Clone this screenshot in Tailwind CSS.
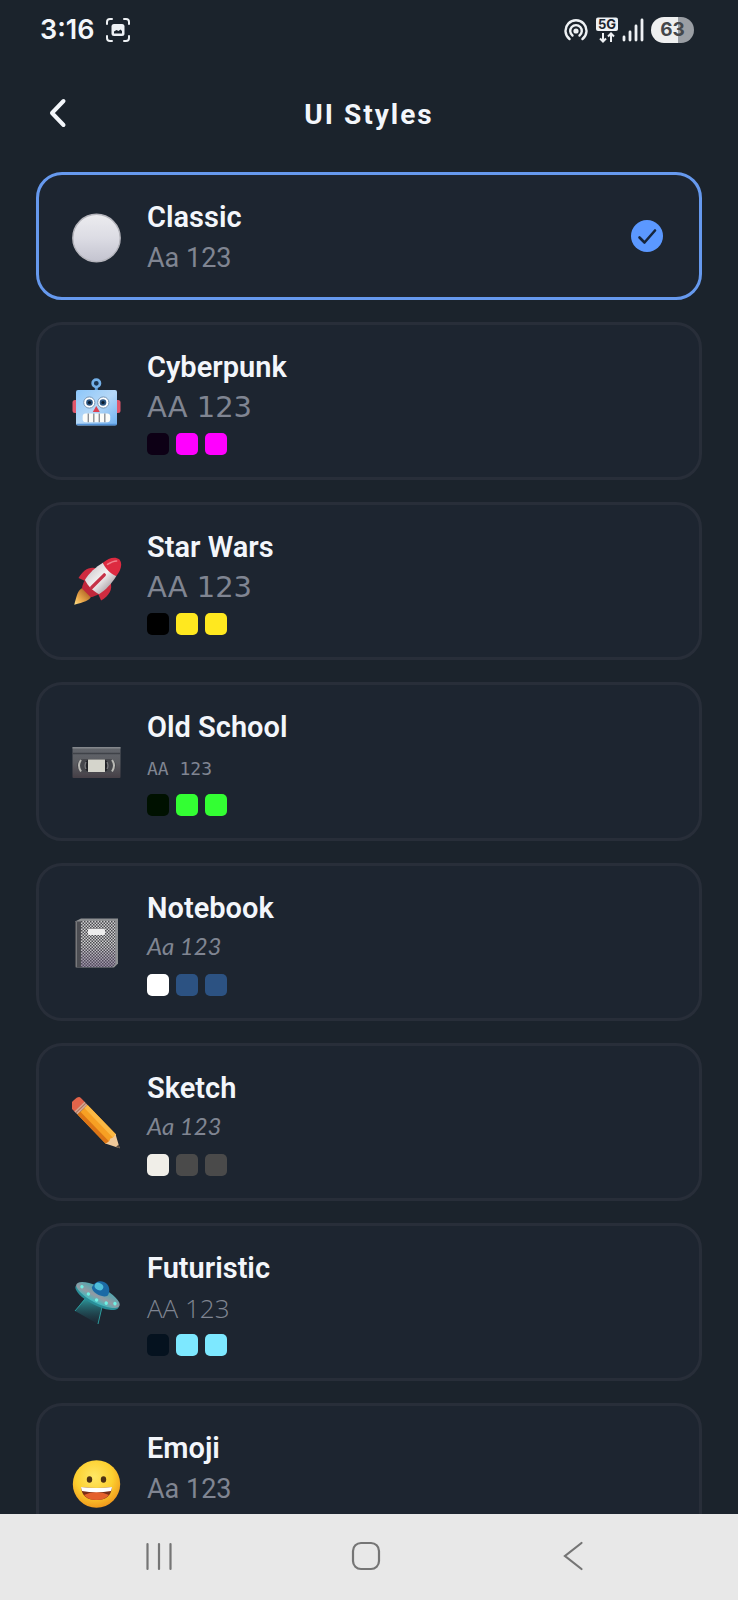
<!DOCTYPE html>
<html lang="en">
  <head>
    <meta charset="UTF-8" />
    <meta name="viewport" content="width=device-width, initial-scale=1.0" />
    <title>UI Styles</title>
    <script src="https://cdn.jsdelivr.net/npm/@tailwindcss/browser@4"></script>
  </head>
  <body class="h-screen flex flex-col bg-[#1b232c] font-[Roboto,sans-serif] text-[#f3f6fb] overflow-hidden">
    <!-- Status bar -->
    <div class="shrink-0 h-[60px] pl-10 pr-11 flex items-center justify-between">
      <div class="flex items-center gap-3">
        <span class="font-[Inter,sans-serif] font-semibold text-[27px] leading-8">3:16</span>
        <svg class="w-6 h-6" viewBox="0 0 24 24" fill="none" stroke="#eef1f4" stroke-width="2" stroke-linecap="round">
          <path d="M1 6V4a3 3 0 0 1 3-3h2M18 1h2a3 3 0 0 1 3 3v2M23 18v2a3 3 0 0 1-3 3h-2M6 23H4a3 3 0 0 1-3-3v-2" />
          <rect x="5.500" y="6" width="13" height="12" rx="2.500" fill="#eef1f4" stroke="none" />
          <path d="M8 15.500v-2l2.500-1.500 2 1 2-1.500 1.500 1.500v2.500z" fill="#1b232c" stroke="none" />
        </svg>
      </div>
      <div class="flex items-center">
        <!-- Hotspot -->
        <svg class="w-6 h-6 mr-2" viewBox="0 0 24 24" fill="none" stroke="#eef1f4" stroke-width="2.400" stroke-linecap="round">
          <path d="M5.500 21a10.500 10.500 0 1 1 13 0" />
          <path d="M8.500 17.500a5.800 5.800 0 1 1 7 0" />
          <circle cx="12" cy="13" r="2.600" fill="#eef1f4" stroke="none" />
        </svg>
        <!-- 5G -->
        <svg class="w-[22px] h-[26px] mr-1" viewBox="0 0 22 26">
          <rect x="0" y="0.500" width="22" height="13.500" rx="2" fill="#eef1f4" />
          <text x="11" y="12" text-anchor="middle" font-family="Inter, sans-serif" font-size="13" font-weight="700" fill="#1b232c">5G</text>
          <path d="M7 16v8.500M4 21.500l3 3 3-3M15 25v-8.500M12 19.500l3-3 3 3" fill="none" stroke="#eef1f4" stroke-width="2" />
        </svg>
        <!-- Signal -->
        <svg class="w-[22px] h-6 mr-[7px]" viewBox="0 0 22 24" stroke="#eef1f4" stroke-width="2.800" stroke-linecap="round">
          <path d="M2 19v3M8 14v8M14 8v14M20 2v20" />
        </svg>
        <!-- Battery -->
        <div class="w-[43px] h-[26px] rounded-full bg-linear-to-r from-[#eeeff0] from-62% to-[#9a9ea4] to-62% flex items-center justify-center font-[Inter,sans-serif] font-bold text-[19px] leading-6 text-[#44474b]">63</div>
      </div>
    </div>

    <!-- Header -->
    <header class="shrink-0 h-[112px] px-10 pb-[2px] grid grid-cols-[36px_1fr_36px] items-center">
      <button type="button" aria-label="Back" class="w-9 h-9 flex items-center justify-center">
        <svg class="w-9 h-9" viewBox="0 0 36 36" fill="none" stroke="#f3f6fb" stroke-width="4" stroke-linecap="round" stroke-linejoin="round">
          <path d="M23.500 4L12 16L23.500 28" />
        </svg>
      </button>
      <h1 class="text-center font-bold text-[28px] leading-10 tracking-[2px]">UI Styles</h1>
    </header>

    <!-- Style list -->
    <main class="flex-1 min-h-0 px-9 flex flex-col gap-[22px] overflow-y-auto [scrollbar-width:none]">
      <button type="button" aria-pressed="true" class="shrink-0 w-full pl-[33px] pr-9 py-[22px] flex items-center gap-[25px] text-left rounded-[26px] border-3 border-[#6699ee] bg-[#1d2530]">
        <svg class="shrink-0 w-[50px] h-[54px]" viewBox="0 0 50 54">
          <defs>
            <linearGradient id="ball" x1="0" y1="0" x2="0" y2="1">
              <stop offset="0" stop-color="#ececef" />
              <stop offset="0.500" stop-color="#dcdce4" />
              <stop offset="1" stop-color="#c3c3cf" />
            </linearGradient>
          </defs>
          <circle cx="24.500" cy="29" r="23.700" fill="url(#ball)" stroke="#b5b5bc" stroke-width="1.400" />
        </svg>
        <span class="flex-1">
          <span class="block font-semibold text-[29px] leading-10">Classic</span>
          <span class="block mt-1 text-[27px] leading-[34px] text-[#808592]">Aa 123</span>
        </span>
        <svg class="shrink-0 w-8 h-8" viewBox="0 0 32 32">
          <circle cx="16" cy="16" r="16" fill="#5b98ff" />
          <path d="M8.500 17.500L13.500 22.500L24 10.500" fill="none" stroke="#16253c" stroke-width="2.600" stroke-linecap="round" stroke-linejoin="round" />
        </svg>
      </button>

      <button type="button" aria-pressed="false" class="shrink-0 w-full pl-[33px] pr-9 py-[22px] flex items-center gap-[25px] text-left rounded-[26px] border-3 border-[#282e39] bg-[#1d2530]">
        <svg class="shrink-0 w-[50px] h-[54px]" viewBox="0 0 50 54">
          <defs>
            <linearGradient id="bot" x1="0" y1="0" x2="1" y2="1">
              <stop offset="0" stop-color="#8cc6fa" />
              <stop offset="0.500" stop-color="#b5d8f7" />
              <stop offset="1" stop-color="#6fb0f0" />
            </linearGradient>
          </defs>
          <path d="M24.300 13v4" stroke="#5b9bd8" stroke-width="3" />
          <circle cx="24.300" cy="9.300" r="3.700" fill="#1c3550" stroke="#74b0e8" stroke-width="2.600" />
          <rect x="0.500" y="26" width="6" height="13" rx="2.500" fill="#e0566a" />
          <rect x="42.500" y="26" width="6" height="13" rx="2.500" fill="#e0566a" />
          <rect x="4" y="16" width="41" height="35.500" rx="2" fill="url(#bot)" />
          <path d="M4.500 50.500h40" stroke="#5592d6" stroke-width="1.600" />
          <circle cx="17.300" cy="28.500" r="5.600" fill="#fff" stroke="#7996b4" />
          <circle cx="31.300" cy="28.500" r="5.600" fill="#fff" stroke="#7996b4" />
          <circle cx="17.500" cy="28.500" r="3.300" fill="#2c5580" />
          <circle cx="31" cy="28.500" r="3.300" fill="#2c5580" />
          <circle cx="17.500" cy="28.500" r="1.600" fill="#0c1b2c" />
          <circle cx="31" cy="28.500" r="1.600" fill="#0c1b2c" />
          <path d="M24.300 32l3.500 6h-7z" fill="#dc4050" />
          <rect x="10.700" y="39.500" width="27.500" height="8.700" rx="3" fill="#fbfbf8" />
          <path d="M16.300 39.500v8.700M21.800 39.500v8.700M27.300 39.500v8.700M32.800 39.500v8.700" stroke="#8b8f95" stroke-width="1.400" />
        </svg>
        <span class="flex-1">
          <span class="block font-semibold text-[29px] leading-10">Cyberpunk</span>
          <span class="block mt-1 font-['DejaVu_Sans',sans-serif] text-[29px] leading-8 text-[#808592]">AA 123</span>
          <span class="mt-[10px] flex gap-[7px]">
            <span class="w-[22px] h-[22px] rounded-[5px] bg-[#0d0015]"></span>
            <span class="w-[22px] h-[22px] rounded-[5px] bg-[#ff00ff]"></span>
            <span class="w-[22px] h-[22px] rounded-[5px] bg-[#ff00ff]"></span>
          </span>
        </span>
      </button>

      <button type="button" aria-pressed="false" class="shrink-0 w-full pl-[33px] pr-9 py-[22px] flex items-center gap-[25px] text-left rounded-[26px] border-3 border-[#282e39] bg-[#1d2530]">
        <svg class="shrink-0 w-[50px] h-[54px]" viewBox="0 0 50 54">
          <defs>
            <linearGradient id="hull" x1="0" y1="0" x2="1" y2="0">
              <stop offset="0" stop-color="#d9d6d8" />
              <stop offset="0.500" stop-color="#f4f2f2" />
              <stop offset="1" stop-color="#b9b2b6" />
            </linearGradient>
            <linearGradient id="flame" x1="0" y1="0" x2="0" y2="1">
              <stop offset="0" stop-color="#b56a28" />
              <stop offset="0.600" stop-color="#f0b050" />
              <stop offset="1" stop-color="#fbe08a" />
            </linearGradient>
          </defs>
          <!-- upright rocket, turned to fly to the upper right -->
          <g transform="translate(27 26) rotate(45)">
            <path d="M-6 17h12c2 5-1 9-6 18c-5-9-8-13-6-18z" fill="url(#flame)" />
            <path d="M-9-7c-8 4-9 11-7 20l8-3z" fill="#cf2c40" />
            <path d="M9-7c8 4 9 11 7 20l-8-3z" fill="#cf2c40" />
            <path d="M-10 9c1 5 3 8 4 9h12c1-1 3-4 4-9z" fill="#c0283b" />
            <path d="M-9.500-15c-2 8-2.500 18-.500 25c6 2 14 2 20 0c2-7 1.500-17-.500-25z" fill="url(#hull)" />
            <path d="M0-29c6 1 8.500 7 9.500 14c-5 2.500-14 2.500-19 0c1-7 3.500-13 9.500-14z" fill="#dd2a40" />
            <path d="M-5-17c1-5 2-7 4-9" fill="none" stroke="#f0808c" stroke-width="1.500" stroke-linecap="round" />
            <rect x="-1.500" y="-9" width="3.200" height="21" rx="1.500" fill="#c63247" />
          </g>
        </svg>
        <span class="flex-1">
          <span class="block font-semibold text-[29px] leading-10">Star Wars</span>
          <span class="block mt-1 font-['DejaVu_Sans',sans-serif] text-[29px] leading-8 text-[#808592]">AA 123</span>
          <span class="mt-[10px] flex gap-[7px]">
            <span class="w-[22px] h-[22px] rounded-[5px] bg-black"></span>
            <span class="w-[22px] h-[22px] rounded-[5px] bg-[#ffe81f]"></span>
            <span class="w-[22px] h-[22px] rounded-[5px] bg-[#ffe81f]"></span>
          </span>
        </span>
      </button>

      <button type="button" aria-pressed="false" class="shrink-0 w-full pl-[33px] pr-9 py-[22px] flex items-center gap-[25px] text-left rounded-[26px] border-3 border-[#282e39] bg-[#1d2530]">
        <svg class="shrink-0 w-[50px] h-[54px]" viewBox="0 0 50 54">
          <defs>
            <linearGradient id="tape" x1="0" y1="0" x2="0" y2="1">
              <stop offset="0" stop-color="#62666c" />
              <stop offset="0.500" stop-color="#5b5c61" />
              <stop offset="1" stop-color="#453f46" />
            </linearGradient>
          </defs>
          <rect x="0.500" y="12" width="48" height="31" rx="1" fill="url(#tape)" />
          <path d="M0.500 12.700h48" stroke="#84878c" stroke-width="1.500" />
          <path d="M0.500 18.500h48" stroke="#3f4248" stroke-width="1.500" />
          <rect x="5" y="24" width="39" height="13.500" rx="6.500" fill="#46474c" />
          <path d="M9 25q-4 5.500 0 11.500M40 25q4 5.500 0 11.500" fill="none" stroke="#b8b8b4" stroke-width="2" />
          <path d="M17 24.500a6.500 6.500 0 0 0 0 12.500zM32 24.500a6.500 6.500 0 0 1 0 12.500z" fill="#222328" />
          <path d="M14 27q-2 4 0 7M35 27q2 4 0 7" fill="none" stroke="#77787c" stroke-width="1.500" />
          <rect x="16" y="24.500" width="17" height="12.500" fill="#d5d5cc" />
        </svg>
        <span class="flex-1">
          <span class="block font-semibold text-[29px] leading-10">Old School</span>
          <span class="block mt-1 font-['DejaVu_Sans_Mono',monospace] text-lg leading-[35px] text-[#808592]">AA 123</span>
          <span class="mt-2 flex gap-[7px]">
            <span class="w-[22px] h-[22px] rounded-[5px] bg-[#001100]"></span>
            <span class="w-[22px] h-[22px] rounded-[5px] bg-[#33ff33]"></span>
            <span class="w-[22px] h-[22px] rounded-[5px] bg-[#33ff33]"></span>
          </span>
        </span>
      </button>

      <button type="button" aria-pressed="false" class="shrink-0 w-full pl-[33px] pr-9 py-[22px] flex items-center gap-[25px] text-left rounded-[26px] border-3 border-[#282e39] bg-[#1d2530]">
        <svg class="shrink-0 w-[50px] h-[54px]" viewBox="0 0 50 54">
          <defs>
            <pattern id="weave" width="3" height="3" patternUnits="userSpaceOnUse">
              <rect width="3" height="3" fill="#d0d0d1" />
              <path d="M0 0h1.500v1.500H0zM1.500 1.500H3V3H1.500z" fill="#4a4b4f" />
            </pattern>
            <linearGradient id="tint" x1="0" y1="0" x2="0" y2="1">
              <stop offset="0.500" stop-color="#5c4a70" stop-opacity="0" />
              <stop offset="1" stop-color="#5c4a70" stop-opacity="0.500" />
            </linearGradient>
          </defs>
          <path d="M9 3.500h37v45l-4 4H4l-1-46z" fill="#8e9092" />
          <path d="M9 6h34.500v43l-3 3H9z" fill="url(#weave)" />
          <path d="M9 6h34.500v43l-3 3H9z" fill="url(#tint)" />
          <path d="M3 6.500h6v46H4q-1 0-1-1z" fill="#4c4d52" />
          <path d="M4.500 7v45" stroke="#77797c" />
          <rect x="16" y="14" width="17" height="6" rx="1" fill="#ececec" />
        </svg>
        <span class="flex-1">
          <span class="block font-semibold text-[29px] leading-10">Notebook</span>
          <span class="block mt-1 font-[Lato,sans-serif] italic text-2xl leading-7 text-[#808592]">Aa 123</span>
          <span class="mt-[14px] flex gap-[7px]">
            <span class="w-[22px] h-[22px] rounded-[5px] bg-white"></span>
            <span class="w-[22px] h-[22px] rounded-[5px] bg-[#2c5282]"></span>
            <span class="w-[22px] h-[22px] rounded-[5px] bg-[#2c5282]"></span>
          </span>
        </span>
      </button>

      <button type="button" aria-pressed="false" class="shrink-0 w-full pl-[33px] pr-9 py-[22px] flex items-center gap-[25px] text-left rounded-[26px] border-3 border-[#282e39] bg-[#1d2530]">
        <svg class="shrink-0 w-[50px] h-[54px]" viewBox="0 0 50 54">
          <!-- pencil lies along its own x axis, eraser first -->
          <g transform="translate(5 9) rotate(46)">
            <path d="M-2-7h6v14h-6q-3 0-3-7t3-7z" fill="#e2644a" />
            <rect x="3.500" y="-7" width="4.500" height="14" fill="#d9a58e" />
            <path d="M5.500-7v14" stroke="#a9705c" />
            <path d="M8-7h41l1.500 4l-1.500 5l1 2l-1.500 3H8z" fill="#f7a023" />
            <path d="M8-7h41v4.500H8z" fill="#fcb944" />
            <path d="M8 3h41l-.500 4H8z" fill="#db7416" />
            <path d="M48-7l13.500 7L48 7q2-3.500 0-7q2-3.500 0-7z" fill="#efc99a" />
            <path d="M58-1.800l3.500 1.800l-3.500 1.800z" fill="#54463c" />
          </g>
        </svg>
        <span class="flex-1">
          <span class="block font-semibold text-[29px] leading-10">Sketch</span>
          <span class="block mt-1 font-[Lato,sans-serif] italic text-2xl leading-7 text-[#808592]">Aa 123</span>
          <span class="mt-[14px] flex gap-[7px]">
            <span class="w-[22px] h-[22px] rounded-[5px] bg-[#f0eee8]"></span>
            <span class="w-[22px] h-[22px] rounded-[5px] bg-[#4a4a4a]"></span>
            <span class="w-[22px] h-[22px] rounded-[5px] bg-[#4a4a4a]"></span>
          </span>
        </span>
      </button>

      <button type="button" aria-pressed="false" class="shrink-0 w-full pl-[33px] pr-9 py-[22px] flex items-center gap-[25px] text-left rounded-[26px] border-3 border-[#282e39] bg-[#1d2530]">
        <svg class="shrink-0 w-[50px] h-[54px]" viewBox="0 0 50 54">
          <defs>
            <linearGradient id="beam" x1="0" y1="0" x2="0" y2="1">
              <stop offset="0" stop-color="#2fa3a6" />
              <stop offset="1" stop-color="#1e4a55" stop-opacity="0.100" />
            </linearGradient>
            <linearGradient id="disc" x1="0" y1="0" x2="0" y2="1">
              <stop offset="0" stop-color="#4aa8b0" />
              <stop offset="0.600" stop-color="#939aa3" />
              <stop offset="1" stop-color="#3fbcc0" />
            </linearGradient>
          </defs>
          <path d="M14 22L3 36L26 49L31 29z" fill="url(#beam)" />
          <path d="M13 24L3 36M30 32L26 49" stroke="#2c9a9c" stroke-width="1" />
          <g transform="translate(26 20) rotate(27)">
            <ellipse cx="0" cy="2" rx="24" ry="8.500" fill="#2a8e98" />
            <ellipse cx="0" cy="0" rx="24" ry="8" fill="url(#disc)" />
            <path d="M-9-4c0-14 18-14 18 0c-3 5-15 5-18 0z" fill="#1b6aa5" />
            <ellipse cx="-3" cy="-8" rx="4.500" ry="3.500" fill="#4fbdd8" />
            <circle cx="-18" cy="0" r="1.700" fill="#6ff0e4" />
            <circle cx="-9" cy="3.500" r="1.700" fill="#6ff0e4" />
            <circle cx="1" cy="5" r="1.700" fill="#6ff0e4" />
            <circle cx="11" cy="3.500" r="1.700" fill="#6ff0e4" />
            <circle cx="19" cy="0" r="1.700" fill="#6ff0e4" />
          </g>
        </svg>
        <span class="flex-1">
          <span class="block font-semibold text-[29px] leading-10">Futuristic</span>
          <span class="block mt-1 font-['Open_Sans',sans-serif] font-light text-[26px] leading-8 text-[#808592]">AA 123</span>
          <span class="mt-[10px] flex gap-[7px]">
            <span class="w-[22px] h-[22px] rounded-[5px] bg-[#05121f]"></span>
            <span class="w-[22px] h-[22px] rounded-[5px] bg-[#7de8ff]"></span>
            <span class="w-[22px] h-[22px] rounded-[5px] bg-[#7de8ff]"></span>
          </span>
        </span>
      </button>

      <button type="button" aria-pressed="false" class="shrink-0 w-full pl-[33px] pr-9 py-[22px] flex items-center gap-[25px] text-left rounded-[26px] border-3 border-[#282e39] bg-[#1d2530]">
        <svg class="shrink-0 w-[50px] h-[54px]" viewBox="0 0 50 54">
          <defs>
            <radialGradient id="face" cx="0.450" cy="0.350" r="0.650">
              <stop offset="0" stop-color="#ffe766" />
              <stop offset="0.600" stop-color="#fdd030" />
              <stop offset="1" stop-color="#f09a1c" />
            </radialGradient>
          </defs>
          <circle cx="24.500" cy="29" r="23.700" fill="url(#face)" />
          <ellipse cx="17.500" cy="24.500" rx="2.700" ry="3.200" fill="#4e3113" />
          <ellipse cx="31.500" cy="24.500" rx="2.700" ry="3.200" fill="#4e3113" />
          <path d="M9 32q15.500 2 31 0q-1 13-15.500 13t-15.500-13z" fill="#7a2d16" />
          <path d="M12 40q12.500-6 25 0q-4 5-12.500 5t-12.500-5z" fill="#e4602c" />
          <path d="M9 32q15.500 2 31 0q-.200 2-1 4q-15 2.500-29 0q-.800-2-1-4z" fill="#fff" />
        </svg>
        <span class="flex-1">
          <span class="block font-semibold text-[29px] leading-10">Emoji</span>
          <span class="block mt-1 text-[27px] leading-[34px] text-[#808592]">Aa 123</span>
          <span class="mt-2 flex gap-[7px]">
            <span class="w-[22px] h-[22px] rounded-[5px] bg-[#fff8e1]"></span>
            <span class="w-[22px] h-[22px] rounded-[5px] bg-[#ffb300]"></span>
            <span class="w-[22px] h-[22px] rounded-[5px] bg-[#ffb300]"></span>
          </span>
        </span>
      </button>
    </main>

    <!-- System navigation -->
    <nav class="shrink-0 h-[86px] pl-14 pr-[62px] pb-[2px] grid grid-cols-3 place-items-center bg-[#e8e8e8]">
      <button type="button" aria-label="Recent apps">
        <svg class="w-8 h-8" viewBox="0 0 32 32" stroke="#757575" stroke-width="2.200" stroke-linecap="round">
          <path d="M4.500 4v25M16 4v25M27.500 4v25" />
        </svg>
      </button>
      <button type="button" aria-label="Home">
        <svg class="w-8 h-8" viewBox="0 0 32 32" fill="none" stroke="#757575" stroke-width="2.200">
          <rect x="3" y="3" width="26" height="26" rx="8" />
        </svg>
      </button>
      <button type="button" aria-label="Go back">
        <svg class="w-8 h-8" viewBox="0 0 32 32" fill="none" stroke="#757575" stroke-width="2.200" stroke-linecap="round">
          <path d="M24.500 3L8 16L24.500 29" />
        </svg>
      </button>
    </nav>
  </body>
</html>
